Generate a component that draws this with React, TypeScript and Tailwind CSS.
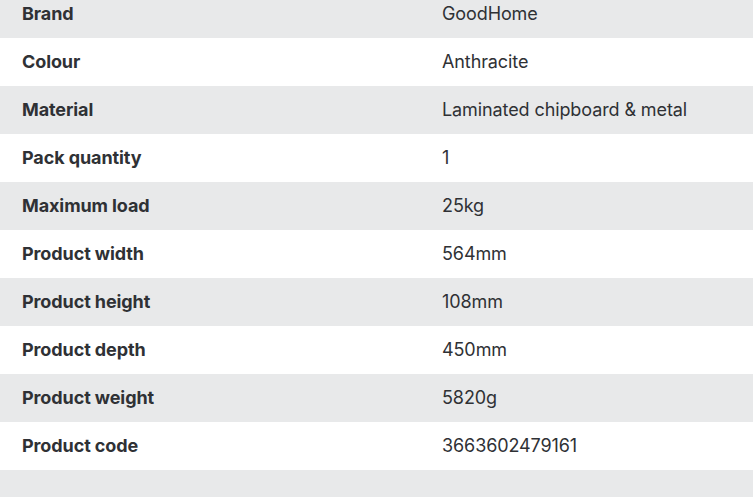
const SPECS: [string, string][] = [
  ["Brand", "GoodHome"],
  ["Colour", "Anthracite"],
  ["Material", "Laminated chipboard & metal"],
  ["Pack quantity", "1"],
  ["Maximum load", "25kg"],
  ["Product width", "564mm"],
  ["Product height", "108mm"],
  ["Product depth", "450mm"],
  ["Product weight", "5820g"],
  ["Product code", "3663602479161"],
];

export default function App() {
  return (
    <div
      className="min-h-[497px] w-[753px] overflow-hidden bg-[#e8e9ea] text-[#2f3135]"
      style={{ fontFamily: "Inter, 'Open Sans', sans-serif" }}
    >
      <div className="-mt-[10px]">
        {SPECS.map(([label, value], i) => (
          <div
            key={label}
            className={`grid h-[48px] grid-cols-[420px_1fr] items-center px-[22px] pb-[2px] text-[18px] tracking-[-0.1px] ${
              i % 2 === 0 ? "bg-[#e8e9ea]" : "bg-white"
            }`}
          >
            <span className="font-bold">{label}</span>
            <span>{value}</span>
          </div>
        ))}
      </div>
    </div>
  );
}
